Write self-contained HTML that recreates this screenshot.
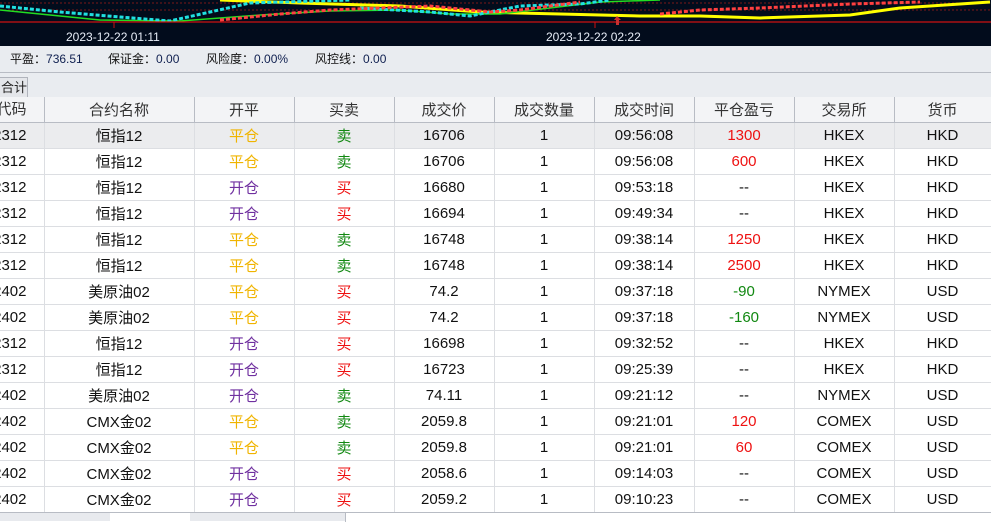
<!DOCTYPE html>
<html><head><meta charset="utf-8"><style>
*{margin:0;padding:0;box-sizing:border-box}
body{width:991px;height:521px;overflow:hidden;background:#fff;font-family:"Liberation Sans","Noto Sans CJK SC",sans-serif;position:relative}
#chart{position:absolute;left:0;top:0;width:991px;height:46px;background:#020c1c}
#info{position:absolute;left:0;top:46px;width:991px;height:27px;background:#e9ecf0;border-bottom:1px solid #b8bcc4;font-size:12px;color:#111;line-height:27px}
#info span{position:absolute}
#info b{font-weight:normal;color:#102050}
#tabrow{position:absolute;left:0;top:73px;width:991px;height:25px;background:#e9ecf0}
#tab{position:absolute;left:-4px;top:4px;width:32px;height:21px;background:#e4e6ea;border:1px solid #b0b4bc;border-bottom:none;font-size:13px;line-height:20px;padding-left:4px;color:#222}
table{position:absolute;left:0;top:97px;width:991px;border-collapse:collapse;table-layout:fixed}
td{height:26px;border-right:1px solid #dcdee2;border-bottom:1px solid #dcdee2;text-align:center;font-size:15px;color:#111;overflow:hidden;white-space:nowrap;padding:0}
tr.h td{background:#f3f4f6;border-bottom:1px solid #b8bcc4;border-right:1px solid #b8bcc4;color:#333;height:25px}
tr.sel td{background:#ebecee}
td.c0{position:relative}
td.c0 span{position:absolute;right:17px;top:0;line-height:26px}
tr.h td.c0 span{line-height:25px;top:0}
.y{color:#f0b400}.p{color:#7030a0}.g{color:#118811}.r{color:#ee1111}
#bot{position:absolute;left:0;top:512px;width:991px;height:9px;background:#e8eaee;border-top:1px solid #b8bcc4}
</style></head><body>
<div id="chart"><svg width="991" height="46">
<line x1="0" y1="3" x2="991" y2="3" stroke="#7a1818" stroke-dasharray="2,2"/>
<line x1="0" y1="10" x2="991" y2="10" stroke="#7a1818" stroke-dasharray="2,2"/>
<polyline fill="none" stroke="#ffff00" stroke-width="3" points="220,0 300,3 400,6 480,12 560,14 640,16 700,16 760,18 850,15 900,8 990,2"/>
<polyline fill="none" stroke="#22dd22" stroke-width="1.5" points="0,10 40,14 100,20 180,21 260,15 330,11 400,10 450,14 500,14 600,2 660,0"/>
<polyline fill="none" stroke="#20e0e0" stroke-width="3" stroke-dasharray="4,2" points="0,6 60,12 120,17 170,21 250,3 350,0"/>
<polyline fill="none" stroke="#20e0e0" stroke-width="3" stroke-dasharray="4,2" points="360,8 430,12 470,16 520,6 580,4 610,0"/>
<polyline fill="none" stroke="#ff4040" stroke-width="3" stroke-dasharray="4,2" points="220,20 280,14 330,10 430,6 490,12 520,10 580,2"/>
<polyline fill="none" stroke="#ff4040" stroke-width="3" stroke-dasharray="4,2" points="660,14 700,10 760,8 850,4 920,2"/>
<line x1="0" y1="22" x2="991" y2="22" stroke="#cc1111" stroke-width="1.3"/>
<line x1="114" y1="22" x2="114" y2="28" stroke="#cc1111"/>
<line x1="595" y1="22" x2="595" y2="28" stroke="#cc1111"/>
<path d="M617 16 L614 20 L616 20 L616 25 L619 25 L619 20 L621 20 Z" fill="#c83030"/>
<text x="66" y="41" fill="#e8eef8" font-size="12" font-family="Liberation Sans">2023-12-22 01:11</text>
<text x="546" y="41" fill="#e8eef8" font-size="12" font-family="Liberation Sans">2023-12-22 02:22</text>
</svg></div>
<div id="info"><span style="left:10px">平盈：<b>736.51</b></span><span style="left:108px">保证金：<b>0.00</b></span><span style="left:206px">风险度：<b>0.00%</b></span><span style="left:315px">风控线：<b>0.00</b></span></div>
<div id="tabrow"><div id="tab">合计</div></div>
<table>
<colgroup><col style="width:44px"><col style="width:150px"><col style="width:100px"><col style="width:100px"><col style="width:100px"><col style="width:100px"><col style="width:100px"><col style="width:100px"><col style="width:100px"><col style="width:97px"></colgroup>
<tr class="h"><td class="c0"><span>代码</span></td><td>合约名称</td><td>开平</td><td>买卖</td><td>成交价</td><td>成交数量</td><td>成交时间</td><td>平仓盈亏</td><td>交易所</td><td>货币</td></tr>
<tr class="sel"><td class="c0"><span>2312</span></td><td>恒指12</td><td class="y">平仓</td><td class="g">卖</td><td>16706</td><td>1</td><td>09:56:08</td><td class="r">1300</td><td>HKEX</td><td>HKD</td></tr>
<tr><td class="c0"><span>2312</span></td><td>恒指12</td><td class="y">平仓</td><td class="g">卖</td><td>16706</td><td>1</td><td>09:56:08</td><td class="r">600</td><td>HKEX</td><td>HKD</td></tr>
<tr><td class="c0"><span>2312</span></td><td>恒指12</td><td class="p">开仓</td><td class="r">买</td><td>16680</td><td>1</td><td>09:53:18</td><td>--</td><td>HKEX</td><td>HKD</td></tr>
<tr><td class="c0"><span>2312</span></td><td>恒指12</td><td class="p">开仓</td><td class="r">买</td><td>16694</td><td>1</td><td>09:49:34</td><td>--</td><td>HKEX</td><td>HKD</td></tr>
<tr><td class="c0"><span>2312</span></td><td>恒指12</td><td class="y">平仓</td><td class="g">卖</td><td>16748</td><td>1</td><td>09:38:14</td><td class="r">1250</td><td>HKEX</td><td>HKD</td></tr>
<tr><td class="c0"><span>2312</span></td><td>恒指12</td><td class="y">平仓</td><td class="g">卖</td><td>16748</td><td>1</td><td>09:38:14</td><td class="r">2500</td><td>HKEX</td><td>HKD</td></tr>
<tr><td class="c0"><span>2402</span></td><td>美原油02</td><td class="y">平仓</td><td class="r">买</td><td>74.2</td><td>1</td><td>09:37:18</td><td class="g">-90</td><td>NYMEX</td><td>USD</td></tr>
<tr><td class="c0"><span>2402</span></td><td>美原油02</td><td class="y">平仓</td><td class="r">买</td><td>74.2</td><td>1</td><td>09:37:18</td><td class="g">-160</td><td>NYMEX</td><td>USD</td></tr>
<tr><td class="c0"><span>2312</span></td><td>恒指12</td><td class="p">开仓</td><td class="r">买</td><td>16698</td><td>1</td><td>09:32:52</td><td>--</td><td>HKEX</td><td>HKD</td></tr>
<tr><td class="c0"><span>2312</span></td><td>恒指12</td><td class="p">开仓</td><td class="r">买</td><td>16723</td><td>1</td><td>09:25:39</td><td>--</td><td>HKEX</td><td>HKD</td></tr>
<tr><td class="c0"><span>2402</span></td><td>美原油02</td><td class="p">开仓</td><td class="g">卖</td><td>74.11</td><td>1</td><td>09:21:12</td><td>--</td><td>NYMEX</td><td>USD</td></tr>
<tr><td class="c0"><span>2402</span></td><td>CMX金02</td><td class="y">平仓</td><td class="g">卖</td><td>2059.8</td><td>1</td><td>09:21:01</td><td class="r">120</td><td>COMEX</td><td>USD</td></tr>
<tr><td class="c0"><span>2402</span></td><td>CMX金02</td><td class="y">平仓</td><td class="g">卖</td><td>2059.8</td><td>1</td><td>09:21:01</td><td class="r">60</td><td>COMEX</td><td>USD</td></tr>
<tr><td class="c0"><span>2402</span></td><td>CMX金02</td><td class="p">开仓</td><td class="r">买</td><td>2058.6</td><td>1</td><td>09:14:03</td><td>--</td><td>COMEX</td><td>USD</td></tr>
<tr><td class="c0"><span>2402</span></td><td>CMX金02</td><td class="p">开仓</td><td class="r">买</td><td>2059.2</td><td>1</td><td>09:10:23</td><td>--</td><td>COMEX</td><td>USD</td></tr>
</table>
<div id="bot"><div style="position:absolute;left:110px;top:0;width:80px;height:9px;background:#fff"></div><div style="position:absolute;left:345px;top:0;width:646px;height:9px;background:#fff;border-left:1px solid #b8bcc4"></div></div>
</body></html>
